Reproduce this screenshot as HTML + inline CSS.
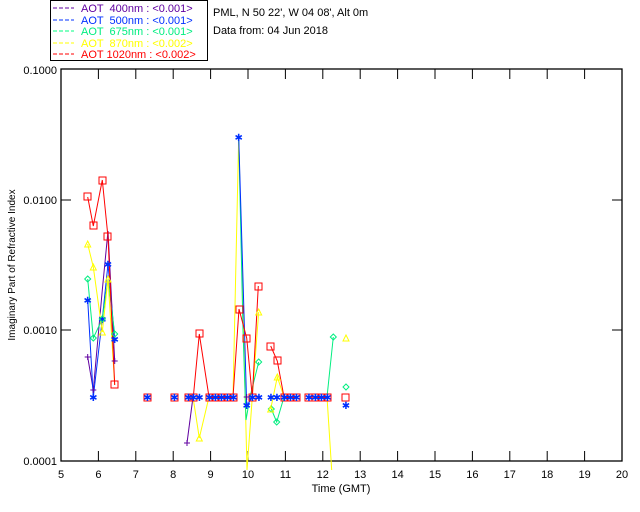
<!DOCTYPE html>
<html><head><style>
body{margin:0;background:#fff;}
svg{display:block;font-family:"Liberation Sans",sans-serif;}
text{white-space:pre;}
</style></head><body>
<svg width="640" height="512" viewBox="0 0 640 512" xmlns="http://www.w3.org/2000/svg" xml:space="preserve">
<rect width="640" height="512" fill="#fff"/>
<rect x="50.5" y="0.5" width="157" height="60" fill="none" stroke="#000"/>
<g font-size="11">
<line x1="53" y1="8" x2="74" y2="8" stroke="#6000a0" stroke-dasharray="4,2"/><text x="81" y="12" fill="#6000a0">AOT  400nm : &lt;0.001&gt;</text>
<line x1="53" y1="20" x2="74" y2="20" stroke="#0030ff" stroke-dasharray="4,2"/><text x="81" y="24" fill="#0030ff">AOT  500nm : &lt;0.001&gt;</text>
<line x1="53" y1="31" x2="74" y2="31" stroke="#00ff80" stroke-dasharray="4,2"/><text x="81" y="35" fill="#00ee80">AOT  675nm : &lt;0.001&gt;</text>
<line x1="53" y1="43" x2="74" y2="43" stroke="#ffff00" stroke-dasharray="4,2"/><text x="81" y="47" fill="#ffff00">AOT  870nm : &lt;0.002&gt;</text>
<line x1="53" y1="54" x2="74" y2="54" stroke="#ff0000" stroke-dasharray="4,2"/><text x="81" y="58" fill="#ff0000">AOT 1020nm : &lt;0.002&gt;</text>
<text x="213" y="16" fill="#000">PML, N 50 22', W 04 08', Alt 0m</text>
<text x="213" y="34" fill="#000">Data from: 04 Jun 2018</text>
</g>
<rect x="61" y="69" width="561" height="392" fill="none" stroke="#000" stroke-width="1.3"/>
<g stroke="#000">
<line x1="61" y1="200" x2="71" y2="200"/><line x1="61" y1="330" x2="71" y2="330"/>
<line x1="612" y1="200" x2="622" y2="200"/><line x1="612" y1="330" x2="622" y2="330"/>
<path d="M98.4 461v-10M135.8 461v-10M173.2 461v-10M210.6 461v-10M248 461v-10M285.4 461v-10M322.8 461v-10M360.2 461v-10M397.6 461v-10M435 461v-10M472.4 461v-10M509.8 461v-10M547.2 461v-10M584.6 461v-10"/>
<path d="M98.4 69v10M135.8 69v10M173.2 69v10M210.6 69v10M248 69v10M285.4 69v10M322.8 69v10M360.2 69v10M397.6 69v10M435 69v10M472.4 69v10M509.8 69v10M547.2 69v10M584.6 69v10"/>
</g>
<g font-size="11" fill="#000" text-anchor="end">
<text x="57" y="74">0.1000</text><text x="57" y="204">0.0100</text><text x="57" y="334">0.0010</text><text x="57" y="465">0.0001</text>
</g>
<g font-size="11" fill="#000" text-anchor="middle">
<text x="61" y="478">5</text><text x="98.4" y="478">6</text><text x="135.8" y="478">7</text><text x="173.2" y="478">8</text><text x="210.6" y="478">9</text><text x="248" y="478">10</text><text x="285.4" y="478">11</text><text x="322.8" y="478">12</text><text x="360.2" y="478">13</text><text x="397.6" y="478">14</text><text x="435" y="478">15</text><text x="472.4" y="478">16</text><text x="509.8" y="478">17</text><text x="547.2" y="478">18</text><text x="584.6" y="478">19</text><text x="622" y="478">20</text>
<text x="341" y="492">Time (GMT)</text>
<text transform="translate(15,265) rotate(-90)" font-size="10">Imaginary Part of Refractive Index</text>
</g>
<g fill="none" stroke-width="1">
<polyline stroke="#6000a0" points="87.7,357 93.3,390 102.3,290 108,231 114.7,361"/>
<polyline stroke="#6000a0" points="187,443 193,397"/>
<polyline stroke="#0030ff" points="87.7,300 93.3,397 102.3,319 108,264 114.7,339"/>
<polyline stroke="#00ee80" points="87.7,279 93.3,338 102.3,319 108,279 114.7,334"/>
<polyline stroke="#ffff00" points="87.7,244 93.3,267 102.3,332 108,279 114.7,385"/>
<polyline stroke="#ffff00" points="193,397 199.3,438 209,397"/>
<polyline stroke="#ffff00" points="233,397 238.7,137 247,470"/>
<polyline stroke="#ffff00" points="247,470 252.3,397 258.7,312"/>
<polyline stroke="#ffff00" points="270.7,409 277.3,377 284,397"/>
<polyline stroke="#ffff00" points="327,397 331.7,470"/>
<polyline stroke="#00ee80" points="238.7,137 243,330 246,420 250,397 258.7,362"/>
<polyline stroke="#00ee80" points="271.3,409 276.7,422 284,397"/>
<polyline stroke="#00ee80" points="327,397 333.3,337"/>
<polyline stroke="#0030ff" points="238.7,137 243,280 246.7,406 252.3,397"/>
<polyline stroke="#ff0000" points="87.7,197 93.3,226 102.3,180 108,237 114.7,385"/>
<polyline stroke="#ff0000" points="188,397 193.3,397 199.3,334 209,397 233,397 239,309 246.7,338 252.3,397 258.3,286"/>
<polyline stroke="#ff0000" points="270.7,346 277.3,361 284,397 296.3,397"/>
<polyline stroke="#ff0000" points="308.7,397 327,397"/>
</g>
<g fill="none" stroke="#ff0000">
<path d="M84 193h7v7h-7zM90 222h7v7h-7zM99 177h7v7h-7zM104 233h7v7h-7zM111 381h7v7h-7zM144 394h7v7h-7zM171 394h7v7h-7zM185 394h7v7h-7zM190 394h7v7h-7zM196 330h7v7h-7zM206 394h7v7h-7zM212 394h7v7h-7zM218 394h7v7h-7zM224 394h7v7h-7zM230 394h7v7h-7zM236 306h7v7h-7zM243 335h7v7h-7zM249 394h7v7h-7zM255 283h7v7h-7zM267 343h7v7h-7zM274 357h7v7h-7zM281 394h7v7h-7zM287 394h7v7h-7zM293 394h7v7h-7zM305 394h7v7h-7zM312 394h7v7h-7zM318 394h7v7h-7zM324 394h7v7h-7zM342 394h7v7h-7z"/>
</g>
<g fill="#0030ff" font-size="10" text-anchor="middle">
<text x="147.5" y="401">✱</text><text x="174.5" y="401">✱</text><text x="188.5" y="401">✱</text><text x="193.5" y="401">✱</text><text x="199.5" y="401">✱</text><text x="209.5" y="401">✱</text><text x="215.5" y="401">✱</text><text x="221.5" y="401">✱</text><text x="227.5" y="401">✱</text><text x="233.5" y="401">✱</text><text x="252.5" y="401">✱</text><text x="259" y="401">✱</text><text x="271" y="401">✱</text><text x="277" y="401">✱</text><text x="284.5" y="401">✱</text><text x="290.5" y="401">✱</text><text x="296.5" y="401">✱</text><text x="309" y="401">✱</text><text x="315.5" y="401">✱</text><text x="321.5" y="401">✱</text><text x="327.5" y="401">✱</text><text x="346" y="409">✱</text><text x="246.7" y="409">✱</text>
<text x="87.7" y="304">✱</text><text x="93.3" y="401">✱</text><text x="102.3" y="323">✱</text><text x="108" y="268">✱</text><text x="114.7" y="343">✱</text><text x="238.7" y="141">✱</text>
</g>
<g fill="none" stroke="#00ee80">
<path d="M87.7 276l3 3-3 3-3-3zM93.3 335l3 3-3 3-3-3zM102.3 316l3 3-3 3-3-3zM114.7 331l3 3-3 3-3-3zM258.7 359l3 3-3 3-3-3zM271.3 406l3 3-3 3-3-3zM276.7 419l3 3-3 3-3-3zM333.3 334l3 3-3 3-3-3zM346 384l3 3-3 3-3-3z"/>
</g>
<g fill="none" stroke="#ffff00">
<path d="M84.7 247l3-6 3 6zM90.3 270l3-6 3 6zM99.3 335l3-6 3 6zM105 282l3-6 3 6zM196.3 441l3-6 3 6zM255.7 315l3-6 3 6zM267.7 412l3-6 3 6zM274.3 380l3-6 3 6zM343 341l3-6 3 6z"/>
</g>
<g stroke="#6000a0">
<path d="M84.7 357h6M87.7 354v6M90.3 390h6M93.3 387v6M111.7 361h6M114.7 358v6M184 443h6M187 440v6M243.7 397h6M246.7 394v6"/>
</g>
</svg>
</body></html>
